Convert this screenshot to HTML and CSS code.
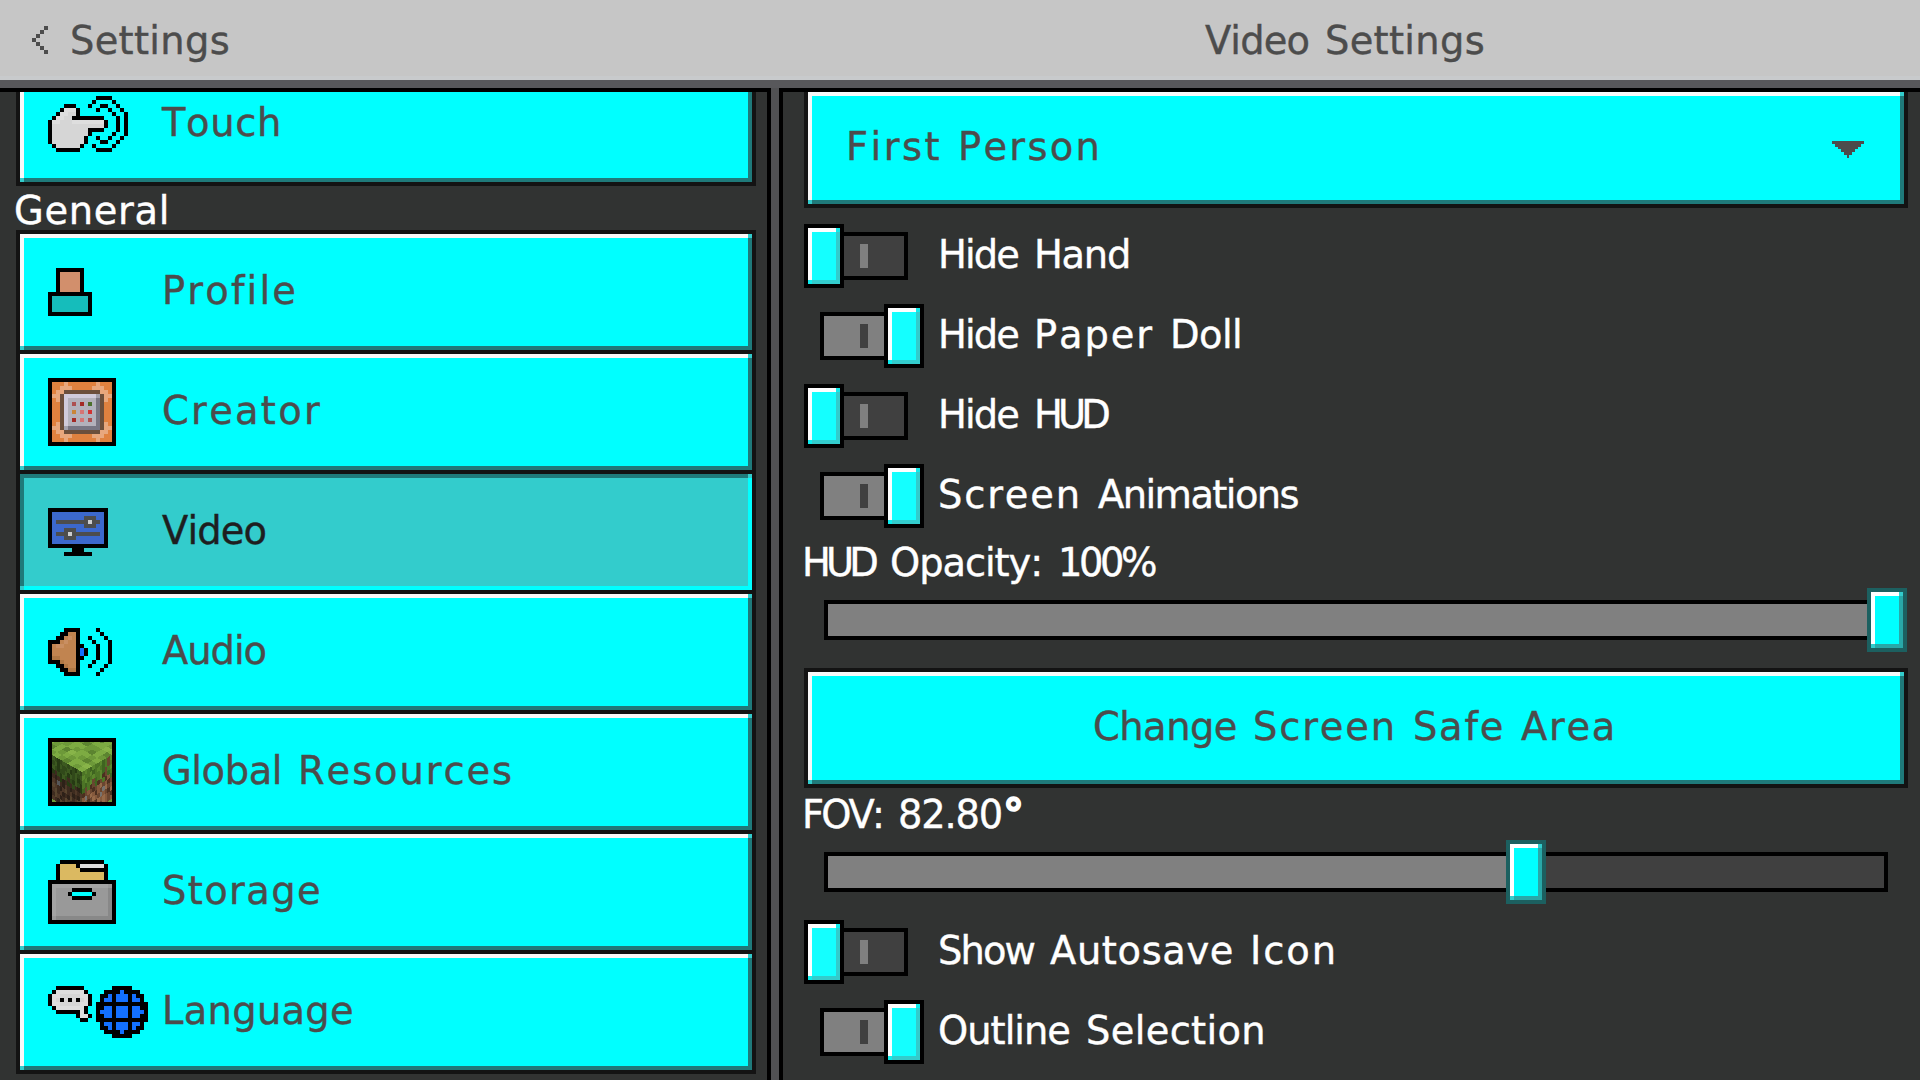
FILE: index.html
```html
<!DOCTYPE html>
<html lang="en">
<head>
<meta charset="utf-8">
<title>Settings</title>
<link rel="stylesheet" href="styles.css">
</head>
<body>
<header class="topbar">
  <div class="topbar-back">
    <svg class="chevron" viewBox="0 0 4 7" width="16" height="28"><path d="M3 0h1v1H3zM2 1h1v1H2zM1 2h1v1H1zM0 3h1v1H0zM1 4h1v1H1zM2 5h1v1H2zM3 6h1v1H3z"/></svg>
    <span class="label">Settings</span>
  </div>
  <div class="topbar-title"><span class="label">Video Settings</span></div>
</header>
<main class="panels">
  <nav class="panel sidebar">
    <div class="tab"><i class="icon" data-icon="touch"></i><span class="label">Touch</span></div>
    <h2 class="group"><span class="label">General</span></h2>
    <div class="tabs">
      <div class="tab"><i class="icon" data-icon="profile"></i><span class="label">Profile</span></div>
      <div class="tab"><i class="icon" data-icon="creator"></i><span class="label">Creator</span></div>
      <div class="tab tab-selected"><i class="icon" data-icon="video"></i><span class="label">Video</span></div>
      <div class="tab"><i class="icon" data-icon="audio"></i><span class="label">Audio</span></div>
      <div class="tab"><i class="icon" data-icon="grass"></i><span class="label">Global Resources</span></div>
      <div class="tab"><i class="icon" data-icon="storage"></i><span class="label">Storage</span></div>
      <div class="tab"><i class="icon" data-icon="language"></i><span class="label">Language</span></div>
    </div>
  </nav>
  <section class="panel content">
    <div class="button dropdown"><span class="label">First Person</span>
      <svg class="arrow" viewBox="0 0 32 17" width="32" height="17"><path d="M0 0h32v3h-3v3h-3v2h-3v3h-3v3h-3v3h-2v-3h-3v-3H9V8H6V6H3V3H0z"/></svg>
    </div>
    <div class="toggles">
      <div class="option"><span class="toggle"><span class="toggle-track"></span><span class="knob"></span></span><span class="label">Hide Hand</span></div>
      <div class="option"><span class="toggle toggle-on"><span class="toggle-track"></span><span class="knob"></span></span><span class="label">Hide Paper Doll</span></div>
      <div class="option"><span class="toggle"><span class="toggle-track"></span><span class="knob"></span></span><span class="label">Hide HUD</span></div>
      <div class="option"><span class="toggle toggle-on"><span class="toggle-track"></span><span class="knob"></span></span><span class="label">Screen Animations</span></div>
    </div>
    <div class="caption caption-opacity"><span class="label">HUD Opacity: 100%</span></div>
    <div class="slider" style="--value: 1"><span class="slider-track"><span class="slider-fill"></span></span><span class="knob knob-slider"></span></div>
    <div class="button action"><span class="label">Change Screen Safe Area</span></div>
    <div class="caption caption-fov"><span class="label">FOV: 82.80</span><span class="degree">°</span></div>
    <div class="slider" style="--value: 0.6604"><span class="slider-track"><span class="slider-fill"></span></span><span class="knob knob-slider"></span></div>
    <div class="toggles">
      <div class="option"><span class="toggle"><span class="toggle-track"></span><span class="knob"></span></span><span class="label">Show Autosave Icon</span></div>
      <div class="option"><span class="toggle toggle-on"><span class="toggle-track"></span><span class="knob"></span></span><span class="label">Outline Selection</span></div>
    </div>
  </section>
</main>
<script src="ui.js"></script>
</body>
</html>
```
FILE: styles.css
```css
* { box-sizing: border-box; }

body {
  margin: 0;
  width: 1920px;
  height: 1080px;
  overflow: hidden;
  background: #515153;
  color: #4c4c4c;
  font-family: "DejaVu Sans", sans-serif;
  font-size: 38.4px;
  -webkit-text-stroke: 0.4px currentColor;
}

.label {
  display: block;
  line-height: 44px;
  margin-left: -2px;
  padding-bottom: 2px;
  white-space: nowrap;
  font-kerning: none;
  font-variant-ligatures: none;
  word-spacing: 3.8px;
}

/* Top bar */
.topbar {
  display: grid;
  grid-template-columns: 768px 1fr;
  height: 88px;
  background: linear-gradient(#c6c6c6 76px, #c8cacc 76px);
  border-bottom: 8px solid #58585b;
}
.topbar-back {
  display: flex;
  align-items: center;
  gap: 24px;
  padding-left: 32px;
}
.topbar-title {
  display: flex;
  align-items: center;
  justify-content: center;
  padding-left: 4px;
}
.topbar .label { padding: 1px 0 0; }
.chevron, .arrow { fill: #4c4c4c; shape-rendering: crispEdges; }

/* Panels */
.panels {
  display: grid;
  grid-template-columns: 771px 1fr;
  gap: 8px;
  height: 992px;
}
.panel {
  height: 992px;
  overflow: hidden;
  background: #313332;
  border: 0 solid #000;
  border-top-width: 4px;
}
.sidebar { border-right-width: 4px; padding: 0 11px 0 16px; }
.content { border-left-width: 4px; padding: 0 12px 0 21px; }

/* Bevelled surfaces */
.tab, .button, .knob {
  --edge: #131313;
  --hi: #f9f9f9;
  --lo: #1f7a7a;
  --corner: #33cccc;
  --face: #00ffff;
  border: 4px solid var(--edge);
  background:
    linear-gradient(var(--corner), var(--corner)) right top / 4px 4px no-repeat,
    linear-gradient(var(--corner), var(--corner)) left bottom / 4px 4px no-repeat,
    linear-gradient(var(--lo), var(--lo)) right top / 4px 100% no-repeat,
    linear-gradient(var(--lo), var(--lo)) left bottom / 100% 4px no-repeat,
    linear-gradient(var(--hi), var(--hi)) left top / 100% 4px no-repeat,
    linear-gradient(var(--hi), var(--hi)) left top / 4px 100% no-repeat,
    var(--face);
}

/* Sidebar */
.tab {
  display: grid;
  grid-template-columns: 116px 1fr;
  align-items: center;
  height: 124px;
  padding-left: 28px;
}
.sidebar > .tab { margin-top: -30px; }
.tabs .tab + .tab { margin-top: -4px; }
.tab-selected {
  --hi: #1f7a7a;
  --lo: #00ffff;
  --face: #33cccc;
  color: #1e1e1f;
}
.icon { display: block; width: 100px; }
.icon svg { display: block; shape-rendering: crispEdges; }
.group {
  display: flex;
  align-items: center;
  height: 44px;
  margin: 0;
  padding-top: 8px;
  font-size: inherit;
  font-weight: 400;
  color: #fff;
}

/* Content */
.button {
  display: flex;
  align-items: center;
  height: 120px;
}
.dropdown {
  justify-content: space-between;
  margin-top: -4px;
  padding: 0 40px;
}
.arrow { margin-top: 3px; }
.action { justify-content: center; margin-top: 16px; }

.toggles {
  display: grid;
  gap: 16px;
  margin-top: 16px;
  color: #fff;
}
.option { display: flex; align-items: center; gap: 16px; height: 64px; }
.toggle {
  display: grid;
  align-items: center;
  width: 120px;
  height: 64px;
}
.toggle-track {
  grid-area: 1 / 1;
  width: 88px;
  height: 48px;
  margin-left: 16px;
  border: 4px solid #000;
  background: linear-gradient(#808080, #808080) center / 8px 24px no-repeat #404040;
}
.toggle-on .toggle-track {
  background: linear-gradient(#404040, #404040) center / 8px 24px no-repeat #808080;
}
.knob {
  --edge: #000;
  --hi: #fff;
  --lo: #33cccc;
  --corner: #0eecec;
  --face: #14ffff;
  grid-area: 1 / 1;
  width: 40px;
  height: 64px;
}
.toggle-on .knob { justify-self: end; }

.caption {
  display: flex;
  align-items: center;
  height: 48px;
  color: #fff;
}
.caption-opacity { margin-top: 12px; }
.caption-fov { margin-top: 4px; }
.degree {
  margin-left: 1px;
  line-height: 44px;
  padding-bottom: 2px;
  font-weight: 700;
  font-size: 42px;
  -webkit-text-stroke-width: 1.5px;
}

.slider { display: grid; align-items: center; height: 64px; }
.slider-track {
  grid-area: 1 / 1;
  width: 1064px;
  height: 40px;
  margin-left: 20px;
  border: 4px solid #000;
  background: #404040;
}
.slider-fill {
  display: block;
  width: calc(var(--value) * 100%);
  height: 32px;
  background: #808080;
}
.knob-slider {
  --edge: #1c6060;
  --lo: #29a8a8;
  --corner: #33cccc;
  --face: #00ffff;
  margin-left: calc(var(--value) * 1063px);
}
```
FILE: ui.js
```js
// Pixel icons: one character per 4px cell, "." is empty.
const palette = {
  k: '#000000', w: '#dedede', v: '#d6d6d6', s: '#d28f6c', t: '#15bdbb',
  o: '#e0813f', p: '#e8a77d', b: '#6c4f3c', l: '#d0cbdb', g: '#b3b1bb',
  d: '#787683', m: '#a4a2ae', 1: '#ad5050', 2: '#a42a26', 3: '#4c6f2b',
  4: '#c9863a', 5: '#d67474', 6: '#d13333', B: '#3c68cc', G: '#4d4d4d',
  L: '#cccccc', c: '#c18450', h: '#c98f62', e: '#b07845', u: '#1370ff',
  y: '#dbb961', r: '#999999', R: '#888888', q: '#a3a3a3'
};

const icons = {
  touch: [
    '............kkkk....',
    '...........k....k...',
    '....kkk...k..kk..k..',
    '...kwwwk....k..k..k.',
    '..kwwvvk........k..k',
    '.kwwvvkkkkkkkk...k.k',
    'kwwvvvwwwwwwwwk..k.k',
    'kvvvvvvvvvvvvvk..k.k',
    'kvvvvvvvvvkkkk...k.k',
    'kvvvvvvvvvk.....k..k',
    'kvvvvvvvvk..k..k..k.',
    'kvvvvvvvvk...kk..k..',
    '.kvvvvvvk..k....k...',
    '..kkkkkk....kkkk....'
  ],
  profile: [
    '..kkkkkkk..',
    '..ksssssk..',
    '..ksssssk..',
    '..ksssssk..',
    '..ksssssk..',
    '..ksssssk..',
    'kkkkkkkkkkk',
    'ktttttttttk',
    'ktttttttttk',
    'ktttttttttk',
    'ktttttttttk',
    'kkkkkkkkkkk'
  ],
  creator: [
    'kkkkkkkkkkkkkkkkk',
    'kooopooooooopoook',
    'koopppooooopppook',
    'koppbbbbbbbbbppok',
    'kppbllllllllmbppk',
    'kopblgggggggdbpok',
    'kooblg1g2g3gdbook',
    'kooblgggggggdbook',
    'kooblg4g5g6gdbook',
    'kooblgggggggdbook',
    'kooblg2g5g1gdbook',
    'kopblgggggggdbpok',
    'kppbmddddddddbppk',
    'koppbbbbbbbbbppok',
    'koopppooooopppook',
    'kooopooooooopoook',
    'kkkkkkkkkkkkkkkkk'
  ],
  video: [
    'kkkkkkkkkkkkkkk',
    'kBBBBBBBBBBBBBk',
    'kBBBBBBBBGGGBBk',
    'kBGGGGGGGGLGGBk',
    'kBBBBBBBBGGGBBk',
    'kBBBGGGBBBBBBBk',
    'kBGGGLGGGGGGGBk',
    'kBBBGGGBBBBBBBk',
    'kBBBBBBBBBBBBBk',
    'kkkkkkkkkkkkkkk',
    '......kkk......',
    '....kkkkkkk....'
  ],
  audio: [
    '....kkkk....k...',
    '...kkcck.....k..',
    '..kkchck..k...k.',
    'kkkchcck...k...k',
    'kchhccckk...k..k',
    'kcccccckuk..k..k',
    'kcccccckuk..k..k',
    'keecccckk...k..k',
    'kkkeccck...k...k',
    '..kkecck..k...k.',
    '...kkeek.....k..',
    '....kkkk....k...'
  ],
  storage: [
    '...kkkkkkkkkkk...',
    '..kyyyykwwwwwwk..',
    '..kyyyyykkkkkkk..',
    '..kyyyyyyyyyyyk..',
    '..kyyyyyyyyyyyk..',
    'kkkkkkkkkkkkkkkkk',
    'kqqqqqqqqqqqqqqrk',
    'kqrrrrkkkkkrrrrRk',
    'kqrrrk.....krrrRk',
    'kqrrrrkkkkkrrrrRk',
    'kqrrrrrrrrrrrrrRk',
    'kqrrrrrrrrrrrrrRk',
    'kqrrrrrrrrrrrrrRk',
    'kqrrrrrrrrrrrrrRk',
    'krRRRRRRRRRRRRRRk',
    'kkkkkkkkkkkkkkkkk'
  ],
  language: [
    '..kkkkkkk.......kkkkk....',
    '.kwwwwwwwk....kkkkukkkk..',
    'kwwvvvvvwwk..kkukuuukukk.',
    'kwvkvkvkvwk..kuukuuukuuk.',
    'kwwvvvvvwwk.kkkkkkkkkkkkk',
    '.kwwwwwwwk..kkuukuuukuukk',
    '..kkkkkkwk..kuuukuuukuuuk',
    '.......kwwk.kkuukuuukuukk',
    '........kk..kkkkkkkkkkkkk',
    '.............kuukuuukuuk.',
    '.............kkukuuukukk.',
    '..............kkkkukkkk..',
    '................kkkkk....'
  ]
};

function cells(rows, colors) {
  let out = '';
  rows.forEach((row, y) => {
    for (let x = 0; x < row.length;) {
      let end = x + 1;
      while (end < row.length && row[end] === row[x]) end++;
      if (colors[row[x]]) {
        out += `<rect x="${x}" y="${y}" width="${end - x}" height="1" fill="${colors[row[x]]}"/>`;
      }
      x = end;
    }
  });
  return out;
}

// Grass block seen from a corner: three skewed faces in a black frame.
function grassBlock() {
  const top = {a: '#6d9939', b: '#7dab42', c: '#5c8430', d: '#88b449'};
  const left = {a: '#31491a', b: '#3c5920', c: '#263a13', e: '#3d2b1f', f: '#4e3828', h: '#58452f', i: '#2d2118', j: '#555658'};
  const right = {a: '#4d7526', b: '#5b872d', c: '#3f6420', e: '#694630', f: '#84593c', h: '#966a49', i: '#4b3020', j: '#77726e'};
  const topRows = [
    'bdabacbbaabb', 'abcabbdabcab', 'bbabcabbaabc', 'cabbaabcabba',
    'abdabcabbaab', 'bacbbabcabda', 'abbaabcbabba', 'bcabbdabacab',
    'abbcabbaabcb', 'babaacbbdaab', 'abcabbabcabb', 'bdabbcabaabb'
  ];
  const leftRows = [
    'bacabbabacba', 'abcbaabcabab', 'bacaabcbabca', 'ceacbaeacbac',
    'eiecieceaeic', 'fejeifeiefef', 'hfeifhefieih', 'fhefieihefhe',
    'ehfiehfeihfi', 'feihfeifehef'
  ];
  const rightRows = [
    'abacbaabcaeb', 'baabcabacaea', 'abcabaabceab', 'acabecabieca',
    'ceaiecieaifc', 'iefeiefhefie', 'fjehfifejhef', 'hfiehfejfeih',
    'efhfeihfhfei', 'fhefhfiehfef'
  ];
  return `<svg width="68" height="68" viewBox="-4 -4 68 68">
    <rect x="-4" y="-4" width="68" height="68"/>
    <svg width="60" height="60" viewBox="0 0 60 60">
      <rect width="60" height="60" fill="#6d9939"/>
      <g transform="matrix(5 -2.83 -5 -2.83 30 30)">${cells(topRows, top)}</g>
      <g transform="matrix(2.5 1.42 0 4.4 0 13)">${cells(leftRows, left)}</g>
      <g transform="matrix(2.5 -1.42 0 4.4 30 30)">${cells(rightRows, right)}</g>
    </svg></svg>`;
}

document.querySelectorAll('[data-icon]').forEach(el => {
  const rows = icons[el.dataset.icon];
  if (!rows) { el.innerHTML = grassBlock(); return; }
  const w = rows[0].length, h = rows.length;
  el.innerHTML = `<svg width="${w * 4}" height="${h * 4}" viewBox="0 0 ${w} ${h}">${cells(rows, palette)}</svg>`;
});

// Word widths follow a 24px cell, with narrower cells for slim characters.
const slim = {i: 8, l: 12, t: 16, f: 20, I: 16, ':': 8, '.': 8};
document.querySelectorAll('.label').forEach(label => {
  const words = label.textContent.split(' ');
  label.textContent = '';
  words.forEach((word, n) => {
    if (n) label.append(' ');
    const span = document.createElement('span');
    span.textContent = word;
    label.append(span);
    const target = [...word].reduce((sum, ch) => sum + (slim[ch] || 24), 0);
    span.style.letterSpacing = (target - span.getBoundingClientRect().width) / word.length + 'px';
  });
});
```
